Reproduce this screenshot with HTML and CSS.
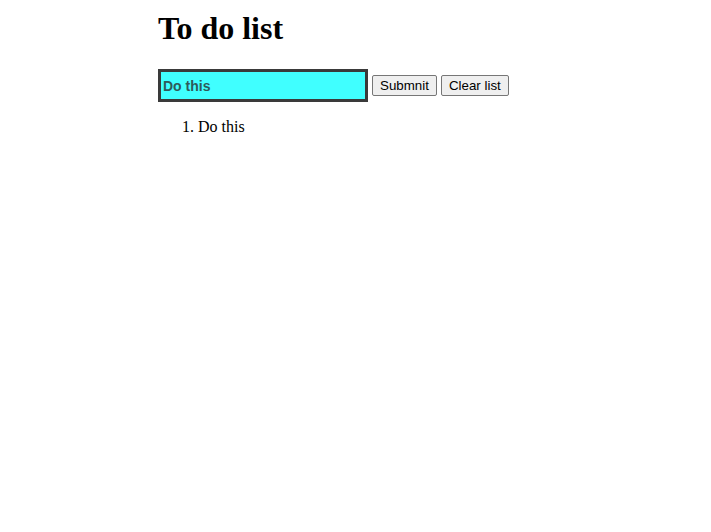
FILE: index.html
```html
<!DOCTYPE html>
<html>
<head>
<meta charset="utf-8">
<title>To do list</title>
<link rel="stylesheet" href="styles.css">
</head>
<body>
<main class="page">
  <h1 class="title">To do list</h1>
  <form class="entry">
    <input class="task-input" type="text" placeholder="Do this">
    <button class="btn" type="button">Submnit</button>
    <button class="btn" type="button">Clear list</button>
  </form>
  <ol class="tasks">
    <li>Do this</li>
  </ol>
</main>
</body>
</html>
```
FILE: styles.css
```css
body {
  margin: 0;
  font-family: "Liberation Serif", serif;
  font-size: 16px;
  color: #000;
  background: #fff;
}
.page {
  width: 395px;
  margin: 0 auto;
  padding-top: 1px;
}
.title {
  font-size: 32px;
  font-weight: bold;
  margin: 9px 0 22px 0;
}
.entry {
  margin: 0;
}
.task-input {
  box-sizing: border-box;
  width: 210px;
  height: 33px;
  border: 3px solid #3a3a3a;
  background: #40ffff;
  font-family: "Liberation Sans", Arial, sans-serif;
  font-size: 14px;
  padding: 0 2px;
  margin: 0;
  vertical-align: bottom;
}
.task-input::placeholder {
  color: #2e5a5a;
  font-weight: bold;
  opacity: 1;
}
.btn {
  font-family: "Liberation Sans", Arial, sans-serif;
  font-size: 13.33px;
  padding: 2px 7px;
  border: 1px solid #767676;
  border-radius: 2px;
  background: #efefef;
  color: #000;
  margin: 0 0 6px 0;
  vertical-align: bottom;
}
.tasks {
  margin: 16px 0;
  padding-left: 40px;
}
```
